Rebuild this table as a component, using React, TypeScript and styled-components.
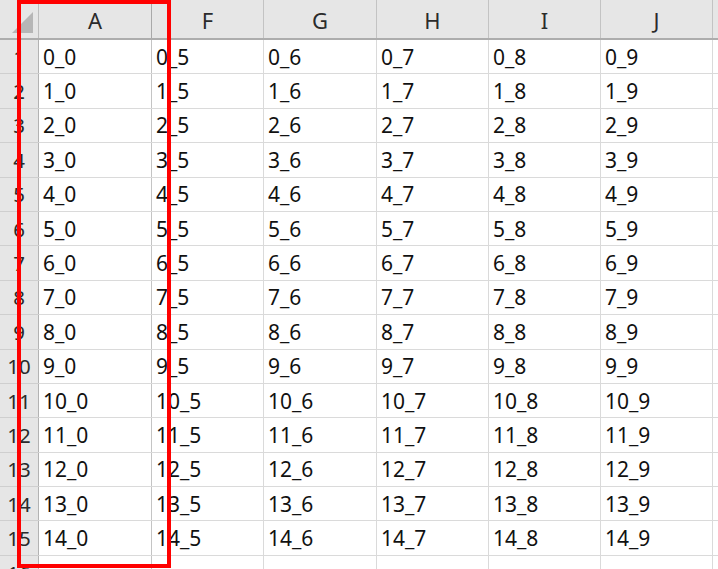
import React from "react";
import styled, { createGlobalStyle } from "styled-components";

const GlobalStyle = createGlobalStyle`
  html, body {
    margin: 0;
    padding: 0;
    background: #fff;
    overflow: hidden;
  }
  body {
    font-family: "Noto Sans", "Open Sans", sans-serif;
  }
`;

// visible columns (B-E are hidden), the last one only peeks in at the right edge
const COLUMNS = [
  { label: "A", width: 113, index: 0 },
  { label: "F", width: 112, index: 5 },
  { label: "G", width: 113, index: 6 },
  { label: "H", width: 112, index: 7 },
  { label: "I", width: 112, index: 8 },
  { label: "J", width: 112, index: 9 },
  { label: "", width: 112, index: 10 },
];
const ROW_COUNT = 16;
const template = `39px ${COLUMNS.map((c) => c.width + "px").join(" ")}`;

const Page = styled.div`
  position: relative;
  width: 718px;
  height: 569px;
  overflow: hidden;
`;

const Sheet = styled.div`
  display: flex;
  flex-direction: column;
  width: max-content;
`;

const Row = styled.div<{ $header?: boolean }>`
  display: grid;
  grid-template-columns: ${template};
  height: ${(p) => (p.$header ? "40px" : "34.4px")};
  box-sizing: border-box;
  border-bottom: ${(p) => (p.$header ? "2px solid #adadad" : "1.5px solid #dadada")};
  background: ${(p) => (p.$header ? "#e6e6e6" : "#fff")};
`;

const Corner = styled.div`
  position: relative;
  border-right: 1px solid #bdbdbd;
  &::after {
    content: "";
    position: absolute;
    right: 5px;
    bottom: 5px;
    width: 0;
    height: 0;
    border-left: 21px solid transparent;
    border-bottom: 21px solid #b6b6b6;
  }
`;

const ColHead = styled.div<{ $dark?: boolean }>`
  display: flex;
  align-items: center;
  justify-content: center;
  border-right: 1px solid ${(p) => (p.$dark ? "#a9a9a9" : "#c3c3c3")};
  font-size: 22px;
  color: #2b2b2b;
  padding-top: 2px;
`;

const RowHead = styled.div`
  display: flex;
  align-items: center;
  justify-content: center;
  background: #e6e6e6;
  border-right: 1px solid #b3b3b3;
  font-size: 20.5px;
  color: #2b2b2b;
  box-shadow: 0 1.5px 0 #cfcfcf;
`;

const Cell = styled.div<{ $dark?: boolean }>`
  display: flex;
  align-items: center;
  padding-left: 4px;
  border-right: ${(p) => (p.$dark ? "1.5px solid #c4c4c4" : "1.5px solid #dadada")};
  font-size: 21px;
  color: #111;
  white-space: nowrap;
  overflow: hidden;
`;

const Highlight = styled.div`
  position: absolute;
  left: 17px;
  top: 0;
  width: 154px;
  height: 568px;
  box-sizing: border-box;
  border: 4px solid #ff0000;
  pointer-events: none;
`;

export default function App() {
  const rows = Array.from({ length: ROW_COUNT }, (_, i) => i);
  return (
    <Page>
      <GlobalStyle />
      <Sheet>
        <Row $header>
          <Corner />
          {COLUMNS.map((c) => (
            <ColHead key={c.index} $dark={c.label === "A"}>
              {c.label}
            </ColHead>
          ))}
        </Row>
        {rows.map((r) => (
          <Row key={r}>
            <RowHead>{r + 1}</RowHead>
            {COLUMNS.map((c) => (
              <Cell key={c.index} $dark={c.label === "A"}>
                {r < 15 && c.label !== "" ? `${r}_${c.index}` : ""}
              </Cell>
            ))}
          </Row>
        ))}
      </Sheet>
      <Highlight />
    </Page>
  );
}
